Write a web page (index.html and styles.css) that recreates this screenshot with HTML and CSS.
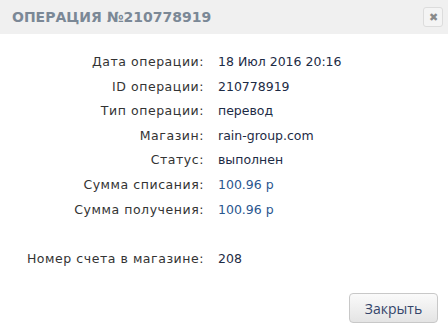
FILE: index.html
```html
<!DOCTYPE html>
<html lang="ru">
<head>
    <meta charset="UTF-8">
    <title>Операция</title>
    <link rel="stylesheet" href="styles.css">
</head>
<body>
    <div class="modal">
        <div class="modal-header">
            <span class="modal-title">ОПЕРАЦИЯ №210778919</span>
            <button class="close-btn">&#10006;</button>
        </div>
        <div class="modal-body">
            <div class="details">
                <span class="label">Дата операции:</span><span class="value">18 Июл 2016 20:16</span>
                <span class="label">ID операции:</span><span class="value">210778919</span>
                <span class="label">Тип операции:</span><span class="value">перевод</span>
                <span class="label">Магазин:</span><span class="value">rain-group.com</span>
                <span class="label">Статус:</span><span class="value">выполнен</span>
                <span class="label">Сумма списания:</span><span class="value sum">100.96 р</span>
                <span class="label">Сумма получения:</span><span class="value sum">100.96 р</span>
                <span class="label"></span><span class="value"></span>
                <span class="label">Номер счета в магазине:</span><span class="value">208</span>
            </div>
        </div>
        <div class="modal-footer">
            <button class="btn">Закрыть</button>
        </div>
    </div>
</body>
</html>
```

FILE: styles.css
```css
body {
    margin: 0;
    padding: 0;
    background-color: #fff;
    font-family: "DejaVu Sans", sans-serif;
}

.modal {
    width: 448px;
    height: 334px;
    display: flex;
    flex-direction: column;
}

.modal-header {
    height: 34px;
    background-color: #f0f0f0;
    display: flex;
    align-items: center;
    justify-content: space-between;
    padding: 0 5px 0 12px;
}

.modal-title {
    font-size: 14px;
    font-weight: bold;
    color: #7b8896;
}

.close-btn {
    width: 20px;
    height: 20px;
    padding: 0;
    border: 1px solid #dcdcdc;
    border-radius: 3px;
    background-color: #f4f4f4;
    color: #8a8a8a;
    font-size: 11px;
    line-height: 18px;
    cursor: pointer;
}

.modal-body {
    flex: 1;
    padding-top: 16px;
}

.details {
    display: grid;
    grid-template-columns: 204px auto;
    column-gap: 14px;
    font-size: 12.5px;
    line-height: 24.6px;
}

.label {
    text-align: right;
    color: #333;
    letter-spacing: 0.55px;
}

.value {
    color: #1d2b45;
    min-height: 24.6px;
}

.sum {
    color: #2a568f;
}

.modal-footer {
    display: flex;
    justify-content: flex-end;
    padding: 0 10px 11px 0;
}

.btn {
    width: 89px;
    height: 30px;
    font-family: "Open Sans", sans-serif;
    font-size: 14px;
    color: #34456a;
    background: linear-gradient(#fafafa, #e4e4e4);
    border: 1px solid #c8c8c8;
    border-radius: 4px;
    cursor: pointer;
}
```
